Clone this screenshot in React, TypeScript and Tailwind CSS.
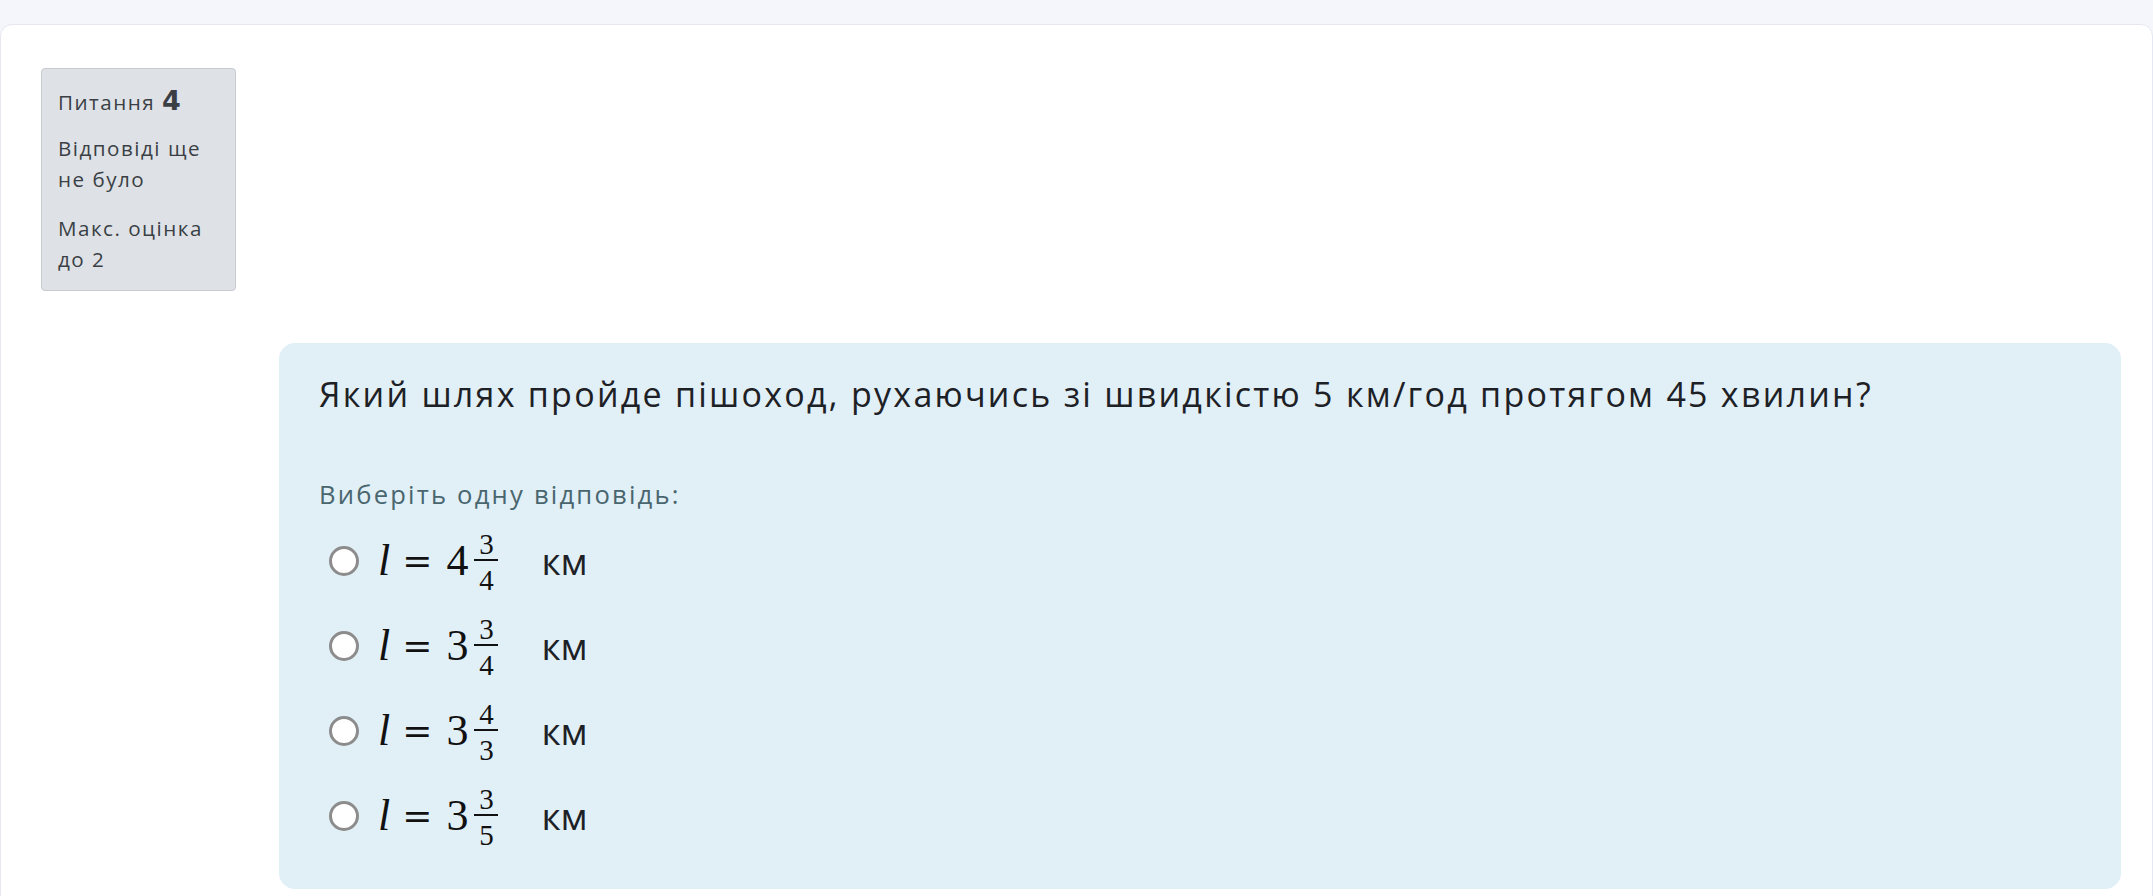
const options = [
  { whole: "4", num: "3", den: "4" },
  { whole: "3", num: "3", den: "4" },
  { whole: "3", num: "4", den: "3" },
  { whole: "3", num: "3", den: "5" },
];

interface OptionProps {
  whole: string;
  num: string;
  den: string;
}

const AnswerOption = ({ whole, num, den }: OptionProps) => {
  return (
    <label className="flex h-[85px] items-center">
      <span className="ml-[50px] h-[30px] w-[30px] shrink-0 rounded-full border-[3px] border-[#8c8c8c] bg-white" />
      <span className="ml-[19px] flex items-center font-['Liberation_Serif',serif] text-[#111]">
        <span className="text-[44px] italic leading-none">l</span>
        <span className="ml-[12px] font-['DejaVu_Serif',serif] text-[36px] leading-none">
          =
        </span>
        <span className="ml-[14px] text-[44px] leading-none">{whole}</span>
        <span className="ml-[6px] mt-[4px] flex flex-col items-center">
          <span className="text-[29px] leading-none">{num}</span>
          <span className="h-[2px] w-[24px] bg-[#111]" />
          <span className="mt-[5px] text-[29px] leading-none">{den}</span>
        </span>
      </span>
      <span className="ml-[43px] font-['Open_Sans',sans-serif] text-[37px] leading-none text-[#1d2125]">
        км
      </span>
    </label>
  );
};

const QuestionInfo = () => {
  return (
    <div className="w-[195px] rounded-[4px] border border-[#c7cbd0] bg-[#dee2e6] px-[16px] pb-[15px] pt-[16px] font-['Open_Sans',sans-serif] text-[20.6px] leading-[31px] tracking-[1.5px] text-[#3a3f45]">
      <h3 className="mb-[15px]">
        Питання{" "}
        <span className="font-['DejaVu_Sans',sans-serif] text-[27px] font-bold tracking-normal">
          4
        </span>
      </h3>
      <p>
        Відповіді ще
        <br />
        не було
      </p>
      <p className="mt-[18px]">
        Макс. оцінка
        <br />
        до 2
      </p>
    </div>
  );
};

export default function App() {
  return (
    <div className="min-h-[896px] bg-[#f5f6fb] pt-[24px]">
      <div className="min-h-[872px] rounded-t-[12px] border border-[#e5e7f2] bg-white pb-[20px] pl-[40px] pr-[31px] pt-[43px]">
        <QuestionInfo />

        <div className="ml-[238px] mt-[52px] rounded-[16px] bg-[#e1eff7] pb-[31px] pl-[40px] pt-[26px]">
          <p className="font-['Open_Sans',sans-serif] text-[34px] leading-[51px] tracking-[2.25px] text-[#1d2125]">
            Який шлях пройде пішоход, рухаючись зі швидкістю 5 км/год протягом
            45 хвилин?
          </p>

          <p className="mt-[56px] font-['Open_Sans',sans-serif] text-[25.6px] leading-[38.4px] tracking-[2.2px] text-[#49666f]">
            Виберіть одну відповідь:
          </p>

          <div className="-ml-[40px] mt-[4px]">
            {options.map((o, i) => (
              <AnswerOption key={i} whole={o.whole} num={o.num} den={o.den} />
            ))}
          </div>
        </div>
      </div>
    </div>
  );
}
